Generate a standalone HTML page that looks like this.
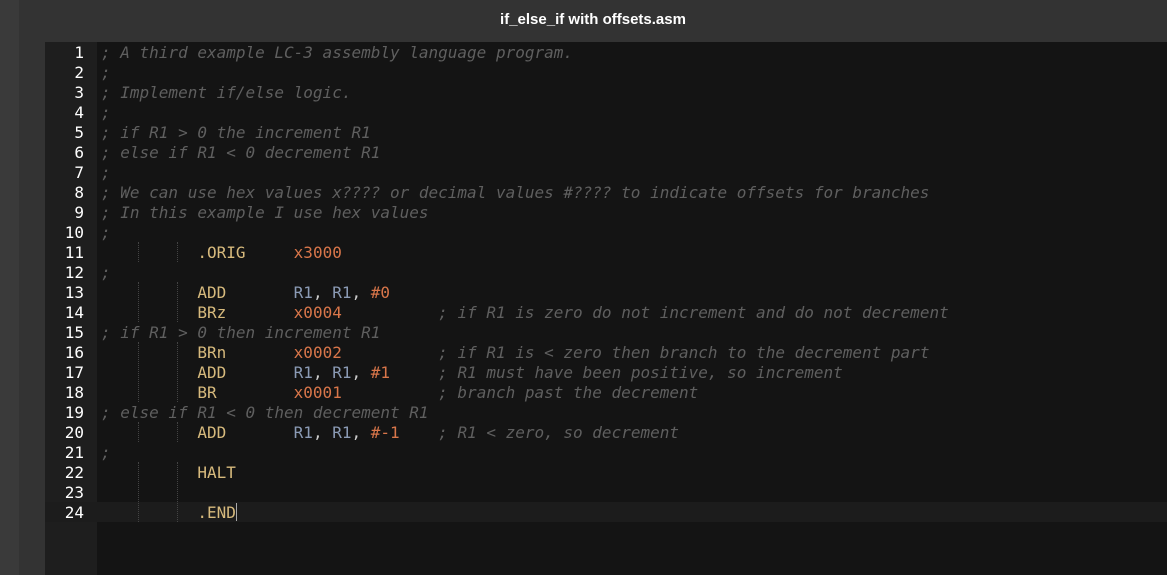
<!DOCTYPE html><html><head><style>
body{margin:0;width:1167px;height:575px;background:#333;overflow:hidden;font-family:"Liberation Mono",monospace}
#side{position:absolute;left:0;top:0;width:19px;height:575px;background:#3a3a3a}
#hdr{position:absolute;left:19px;top:0;width:1148px;height:42px;background:#333;color:#fff;font:bold 15px "Liberation Sans",sans-serif;text-align:center;line-height:40px}
#gut{position:absolute;left:45px;top:42px;width:52px;height:533px;background:#1e1e1e}
#code{position:absolute;left:97px;top:42px;width:1070px;height:533px;background:#141414}
.cur{position:absolute;left:45px;top:502px;width:1122px;height:20px;background:#1c1c1c}
pre{margin:0;position:absolute;top:43px;font-size:16px;line-height:20px}
#num{left:45px;width:39px;text-align:right;color:#fff}
#txt{left:101px;color:#ccc}
.c{color:#5f5f5f;font-style:italic}.k{color:#d7ba7d}.n{color:#d9764a}.r{color:#8b9bb5}
.g{position:absolute;width:0;border-left:1px dotted #444}
.caret{display:inline-block;width:1px;height:18px;background:#aaa;vertical-align:-3px}
</style></head><body>
<div id="side"></div><div id="hdr">if_else_if with offsets.asm</div>
<div id="gut"></div><div id="code"></div><div class="cur"></div>
<div class="g" style="left:138px;top:242px;height:20px"></div><div class="g" style="left:177px;top:242px;height:20px"></div>
<div class="g" style="left:138px;top:282px;height:40px"></div><div class="g" style="left:177px;top:282px;height:40px"></div>
<div class="g" style="left:138px;top:342px;height:60px"></div><div class="g" style="left:177px;top:342px;height:60px"></div>
<div class="g" style="left:138px;top:422px;height:20px"></div><div class="g" style="left:177px;top:422px;height:20px"></div>
<div class="g" style="left:138px;top:462px;height:60px"></div><div class="g" style="left:177px;top:462px;height:60px"></div>
<pre id="num">1
2
3
4
5
6
7
8
9
10
11
12
13
14
15
16
17
18
19
20
21
22
23
24</pre>
<pre id="txt"><span class="c">; A third example LC-3 assembly language program.</span>
<span class="c">;</span>
<span class="c">; Implement if/else logic.</span>
<span class="c">;</span>
<span class="c">; if R1 &gt; 0 the increment R1</span>
<span class="c">; else if R1 &lt; 0 decrement R1</span>
<span class="c">;</span>
<span class="c">; We can use hex values x???? or decimal values #???? to indicate offsets for branches</span>
<span class="c">; In this example I use hex values</span>
<span class="c">;</span>
          <span class="k">.ORIG</span>     <span class="n">x3000</span>
<span class="c">;</span>
          <span class="k">ADD</span>       <span class="r">R1</span>, <span class="r">R1</span>, <span class="n">#0</span>
          <span class="k">BRz</span>       <span class="n">x0004</span>          <span class="c">; if R1 is zero do not increment and do not decrement</span>
<span class="c">; if R1 &gt; 0 then increment R1</span>
          <span class="k">BRn</span>       <span class="n">x0002</span>          <span class="c">; if R1 is &lt; zero then branch to the decrement part</span>
          <span class="k">ADD</span>       <span class="r">R1</span>, <span class="r">R1</span>, <span class="n">#1</span>     <span class="c">; R1 must have been positive, so increment</span>
          <span class="k">BR</span>        <span class="n">x0001</span>          <span class="c">; branch past the decrement</span>
<span class="c">; else if R1 &lt; 0 then decrement R1</span>
          <span class="k">ADD</span>       <span class="r">R1</span>, <span class="r">R1</span>, <span class="n">#-1</span>    <span class="c">; R1 &lt; zero, so decrement</span>
<span class="c">;</span>
          <span class="k">HALT</span>

          <span class="k">.END</span><span class="caret"></span></pre>
</body></html>
